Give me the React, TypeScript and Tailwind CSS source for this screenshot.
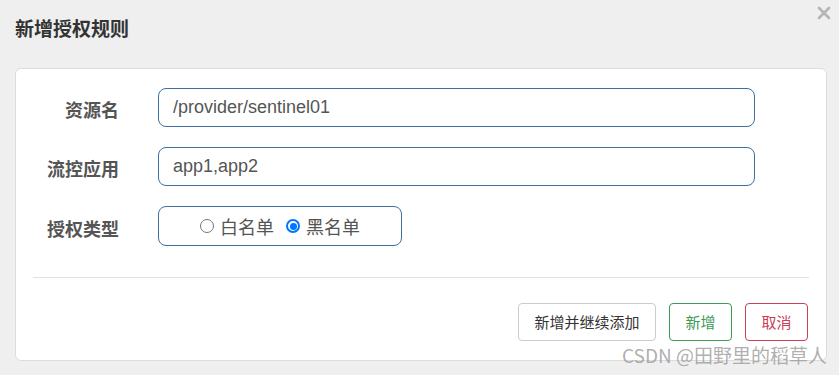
import React, { useState } from 'react';

const cjk = { fontFamily: '"Microsoft YaHei", "Noto Sans CJK SC", "Liberation Sans", sans-serif' };

export default function App() {
  const [type, setType] = useState<'white' | 'black'>('black');

  return (
    <div className="relative w-[839px] h-[375px] bg-[#efefef] overflow-hidden" style={cjk}>
      {/* Header */}
      <div className="flex items-start justify-between pl-[15px] pr-[8px] pt-[14px]">
        <h1 className="text-[19px] font-bold text-[#333] leading-[28px]">新增授权规则</h1>
        <button className="text-[#aaa] mt-[-8px]">
          <svg width="14" height="14" viewBox="0 0 14 14">
            <path d="M2 2L12 12M12 2L2 12" stroke="#b5b5b5" strokeWidth="2.6" strokeLinecap="round" />
          </svg>
        </button>
      </div>

      {/* Card */}
      <div className="ml-[15px] mt-[26px] w-[812px] h-[293px] bg-white border border-[#dcdcdc] rounded-[6px] flex flex-col">
        <div className="flex flex-col gap-[20px] pt-[19px]">
          <div className="flex items-center">
            <label className="w-[103px] mt-[4px] text-right text-[18px] font-bold text-[#555]">资源名</label>
            <input
              defaultValue="/provider/sentinel01"
              className="ml-[39px] w-[597px] h-[39px] rounded-[8px] border border-[#3c6f9f] px-[14px] text-[18px] text-[#555] outline-none"
              style={{ fontFamily: '"Liberation Sans", Arial, sans-serif' }}
            />
          </div>
          <div className="flex items-center">
            <label className="w-[103px] mt-[4px] text-right text-[18px] font-bold text-[#555]">流控应用</label>
            <input
              defaultValue="app1,app2"
              className="ml-[39px] w-[597px] h-[39px] rounded-[8px] border border-[#3c6f9f] px-[14px] text-[18px] text-[#555] outline-none"
              style={{ fontFamily: '"Liberation Sans", Arial, sans-serif' }}
            />
          </div>
          <div className="flex items-center">
            <label className="w-[103px] mt-[4px] text-right text-[18px] font-bold text-[#555]">授权类型</label>
            <div className="ml-[39px] w-[244px] h-[40px] rounded-[8px] border border-[#3c6f9f] flex items-center pl-[41px] gap-[12px] text-[18px] text-[#555]">
              <label className="flex items-center gap-[6px] cursor-pointer" onClick={() => setType('white')}>
                <span className={`w-[14px] h-[14px] rounded-full border flex items-center justify-center ${type === 'white' ? 'border-[#0075ff] border-[2px]' : 'border-[#767676]'}`}>
                  {type === 'white' && <span className="w-[7px] h-[7px] rounded-full bg-[#0075ff]" />}
                </span>
                白名单
              </label>
              <label className="flex items-center gap-[6px] cursor-pointer" onClick={() => setType('black')}>
                <span className={`w-[14px] h-[14px] rounded-full border flex items-center justify-center ${type === 'black' ? 'border-[#0075ff] border-[2px]' : 'border-[#767676]'}`}>
                  {type === 'black' && <span className="w-[7px] h-[7px] rounded-full bg-[#0075ff]" />}
                </span>
                黑名单
              </label>
            </div>
          </div>
        </div>

        <div className="mx-[17px] mt-[31px] border-t border-[#e0e0e0]" />

        <div className="flex justify-end gap-[13px] pr-[18px] mt-[25px]">
          <button className="h-[38px] w-[138px] rounded-[4px] border border-[#ccc] bg-white text-[15px] text-[#333]">新增并继续添加</button>
          <button className="h-[38px] w-[63px] rounded-[4px] border border-[#3d9b55] bg-white text-[15px] text-[#3d9b55]">新增</button>
          <button className="h-[38px] w-[63px] rounded-[4px] border border-[#c9405a] bg-white text-[15px] text-[#c9405a]">取消</button>
        </div>
      </div>

      {/* Watermark */}
      <div className="absolute right-[12px] bottom-[6px] text-[19px] text-[#9a9a9a]/80 whitespace-nowrap">
        CSDN @田野里的稻草人
      </div>
    </div>
  );
}
